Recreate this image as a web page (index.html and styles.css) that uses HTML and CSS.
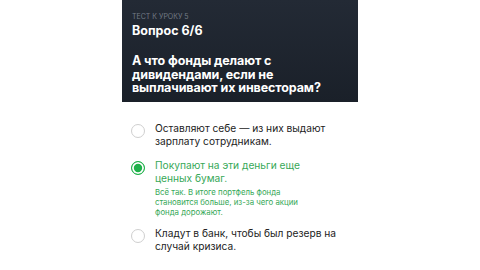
FILE: index.html
```html
<!DOCTYPE html>
<html lang="ru">
<head>
  <meta charset="UTF-8" />
  <title>Тест к уроку 5</title>
  <link rel="stylesheet" href="styles.css">
</head>
<body>
  <div class="quiz">
    <div class="head">
      <div class="label">ТЕСТ К УРОКУ 5</div>
      <div class="num">Вопрос 6/6</div>
      <div class="question">А что фонды делают с<br>дивидендами, если не<br>выплачивают их инвесторам?</div>
    </div>
    <div class="answers">
      <div class="answer">
        <span class="radio"></span>
        <div class="text">Оставляют себе — из них выдают<br>зарплату сотрудникам.</div>
      </div>
      <div class="answer right">
        <span class="radio"></span>
        <div class="text">
          Покупают на эти деньги еще<br>ценных бумаг.
          <p class="note">Всё так. В итоге портфель фонда<br>становится больше, из-за чего акции<br>фонда дорожают.</p>
        </div>
      </div>
      <div class="answer">
        <span class="radio"></span>
        <div class="text">Кладут в банк, чтобы был резерв на<br>случай кризиса.</div>
      </div>
    </div>
  </div>
</body>
</html>
```

FILE: styles.css
```css
* {
  box-sizing: border-box;
}

body {
  margin: 0;
  background: #fff;
  font-family: Inter, 'Noto Sans', sans-serif;
}

.quiz {
  width: 236px;
  margin: 0 0 0 122px;
}

.head {
  background: linear-gradient(180deg, #232a35, #1a2029);
  padding: 12px 10px 0;
  height: 102px;
  color: #fff;
}

.label {
  font-size: 7px;
  line-height: 9px;
  color: #737b86;
}

.num {
  font-size: 12.5px;
  line-height: 16px;
  font-weight: 700;
  margin-top: 1.5px;
}

.question {
  font-size: 12.5px;
  font-weight: 700;
  line-height: 13.5px;
  margin-top: 15.5px;
  letter-spacing: -0.1px;
  white-space: nowrap;
}

.answers {
  padding: 19.5px 9px 0;
}

.answer {
  display: flex;
  gap: 10px;
  margin-bottom: 10px;
  font-size: 10.2px;
  line-height: 13.5px;
  color: #222;
}

.text {
  white-space: nowrap;
}

.radio {
  flex: none;
  width: 14px;
  height: 14px;
  margin-top: 2px;
  border: 1.2px solid #cfcfcf;
  border-radius: 50%;
}

.right {
  color: #36a857;
}

.right .radio {
  border: 1.5px solid #1fb14a;
  background: #1fb14a;
  box-shadow: inset 0 0 0 1.8px #fff;
}

.note {
  margin: 1px 0 0;
  font-size: 7.8px;
  line-height: 10px;
}
```
